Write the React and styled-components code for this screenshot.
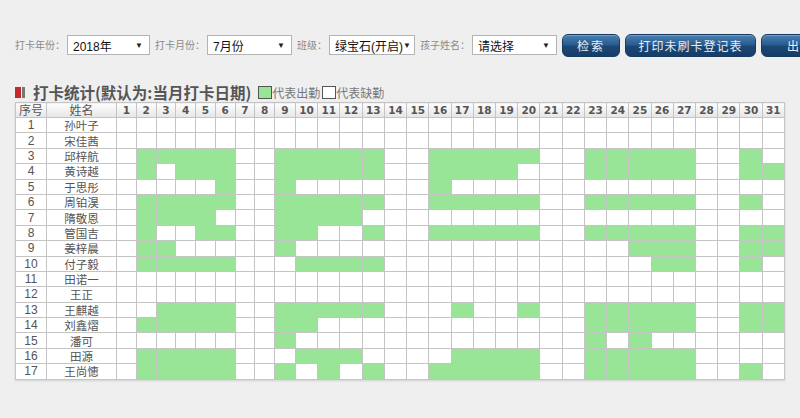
import React from "react";
import styled, { createGlobalStyle } from "styled-components";

const GlobalStyle = createGlobalStyle`
  html, body { margin: 0; padding: 0; background: #efefef; }
  body { font-family: "Liberation Sans", "Noto Sans CJK SC", sans-serif; }
`;

const Page = styled.div`
  width: 800px;
  height: 418px;
  overflow: hidden;
  background: #efefef;
  padding: 34px 0 0 15px;
  box-sizing: border-box;
`;

const Toolbar = styled.div`
  display: flex;
  align-items: center;
  white-space: nowrap;
  height: 22px;
`;

const Label = styled.span`
  font-family: "Noto Sans CJK SC", sans-serif;
  font-size: 10px;
  color: #8a8a8a;
  margin: 0 2px 0 ${(p) => (p.$first ? 0 : 5)}px;
  line-height: 20px;
  flex-shrink: 0;
`;

const Select = styled.div`
  box-sizing: border-box;
  width: ${(p) => p.$w}px;
  height: 20px;
  background: #fff;
  border: 1px solid #b4b4b4;
  display: flex;
  align-items: center;
  justify-content: space-between;
  padding: 0 6px 0 5px;
  font-family: "Liberation Sans", "Noto Sans CJK SC", sans-serif;
  font-size: 12px;
  color: #111;
  flex-shrink: 0;
`;

const Arrow = styled.span`
  font-size: 8px;
  color: #222;
`;

const Button = styled.div`
  box-sizing: border-box;
  flex-shrink: 0;
  width: ${(p) => p.$w}px;
  height: 23px;
  margin-left: 5px;
  border-radius: 6px;
  border: 1px solid #163a60;
  background: linear-gradient(#4b7fb2 0%, #2a5d90 45%, #1c4775 55%, #173d66 100%);
  box-shadow: inset 0 1px 0 rgba(255, 255, 255, 0.25);
  color: #e6eef8;
  font-family: "Noto Sans CJK SC", sans-serif;
  font-size: 12px;
  letter-spacing: ${(p) => p.$ls || 0}px;
  display: flex;
  align-items: center;
  justify-content: ${(p) => (p.$left ? "flex-start" : "center")};
  padding-left: ${(p) => (p.$left ? 25 : 0)}px;
`;

const TitleRow = styled.div`
  display: flex;
  align-items: center;
  margin-top: 27px;
  height: 18px;
`;

const Marker = styled.span`
  display: inline-block;
  width: 6px;
  height: 11px;
  background: #c42a2a;
  margin-right: 1px;
`;

const MarkerBar = styled.span`
  display: inline-block;
  width: 3px;
  height: 11px;
  background: #777;
  margin-right: 8px;
`;

const Title = styled.span`
  font-family: "Noto Sans CJK SC", sans-serif;
  font-weight: 700;
  font-size: 15.5px;
  line-height: 17px;
  color: #555;
  margin-right: 7px;
`;

const LegendBox = styled.span`
  display: inline-block;
  box-sizing: border-box;
  width: 14px;
  height: 13px;
  border: 1px solid #555;
  background: ${(p) => (p.$on ? "#98e598" : "#fff")};
`;

const LegendText = styled.span`
  font-family: "Noto Sans CJK SC", sans-serif;
  font-size: 12px;
  line-height: 15px;
  color: #777;
  margin-right: 2px;
`;

const Table = styled.table`
  margin-top: 1px;
  border-collapse: collapse;
  table-layout: fixed;
  width: 770px;
  background: #fff;
  box-shadow: 0 1px 2px rgba(0, 0, 0, 0.12);
`;

const Th = styled.th`
  height: 14px;
  padding: 0;
  border: 1px solid #c4c4c4;
  background: linear-gradient(#fdfdfd, #e6e6e6);
  font-family: "DejaVu Sans", "Noto Sans CJK SC", sans-serif;
  font-weight: 700;
  font-size: 10.5px;
  color: #555;
  text-align: center;
  line-height: 14px;
  overflow: hidden;
  white-space: nowrap;
`;

const ThCn = styled(Th)`
  font-family: "Noto Sans CJK SC", sans-serif;
  font-weight: 400;
  font-size: 12px;
`;

const Td = styled.td`
  height: 14.4px;
  padding: 0;
  border: 1px solid #c4c4c4;
  background: ${(p) => (p.$on ? "#98e598" : "#fff")};
  font-family: "Noto Sans CJK SC", sans-serif;
  font-size: 11.5px;
  color: #555;
  text-align: center;
  line-height: 14px;
  overflow: hidden;
  white-space: nowrap;
`;

const NumTd = styled(Td)`
  font-family: "Liberation Sans", sans-serif;
  font-size: 12px;
`;

const r = (a, b) => Array.from({ length: b - a + 1 }, (_, i) => a + i);

const students = [
  ["孙叶子", []],
  ["宋佳茜", []],
  ["邱梓航", [...r(2, 6), ...r(9, 13), ...r(16, 20), ...r(23, 27), 30]],
  ["黄诗越", [2, 4, 5, 6, ...r(9, 13), ...r(16, 19), ...r(23, 27), 30, 31]],
  ["于思彤", [6, 9, 16]],
  ["周铂淏", [...r(2, 6), ...r(9, 13), ...r(16, 20), ...r(23, 27), 30]],
  ["隋敬恩", [...r(2, 5), ...r(9, 12)]],
  ["管国吉", [2, 5, 6, 9, 10, 13, ...r(16, 20), ...r(23, 27), 30, 31]],
  ["姜梓晨", [2, 3, 9, 25, 26, 27, 30, 31]],
  ["付子毅", [...r(2, 6), ...r(10, 13), 26, 27, 30]],
  ["田诺一", []],
  ["王正", []],
  ["王麒越", [...r(3, 6), ...r(9, 13), 17, 20, ...r(23, 27), 30, 31]],
  ["刘鑫熠", [...r(2, 6), 9, 10, ...r(23, 27), 30, 31]],
  ["潘可", [9, 23, 25]],
  ["田源", [...r(2, 6), 10, 11, 12, ...r(17, 20), ...r(23, 27)]],
  ["王尚憓", [...r(2, 6), 9, 11, 13, ...r(16, 20), ...r(23, 27), 30]],
];

const days = r(1, 31);
const dayWidth = (d) => (d <= 8 ? 19.75 : d === 9 ? 21 : 22.23);

export default function App() {
  return (
    <Page>
      <GlobalStyle />
      <Toolbar>
        <Label $first>打卡年份：</Label>
        <Select $w={83}>
          <span>2018年</span>
          <Arrow>▼</Arrow>
        </Select>
        <Label>打卡月份：</Label>
        <Select $w={85}>
          <span>7月份</span>
          <Arrow>▼</Arrow>
        </Select>
        <Label>班级：</Label>
        <Select $w={86}>
          <span>绿宝石(开启)</span>
          <Arrow>▼</Arrow>
        </Select>
        <Label>孩子姓名：</Label>
        <Select $w={85}>
          <span>请选择</span>
          <Arrow>▼</Arrow>
        </Select>
        <Button $w={58} $ls={2}>检索</Button>
        <Button $w={131} $ls={1}>打印未刷卡登记表</Button>
        <Button $w={110} $ls={1} $left>出勤统计表</Button>
      </Toolbar>
      <TitleRow>
        <Marker />
        <MarkerBar />
        <Title>打卡统计(默认为:当月打卡日期)</Title>
        <LegendBox $on />
        <LegendText>代表出勤</LegendText>
        <LegendBox />
        <LegendText>代表缺勤</LegendText>
      </TitleRow>
      <Table>
        <colgroup>
          <col style={{ width: 31 }} />
          <col style={{ width: 70 }} />
          {days.map((d) => (
            <col key={d} style={{ width: dayWidth(d) }} />
          ))}
        </colgroup>
        <thead>
          <tr>
            <ThCn>序号</ThCn>
            <ThCn>姓名</ThCn>
            {days.map((d) => (
              <Th key={d}>{d}</Th>
            ))}
          </tr>
        </thead>
        <tbody>
          {students.map(([name, present], i) => (
            <tr key={name}>
              <NumTd>{i + 1}</NumTd>
              <Td>{name}</Td>
              {days.map((d) => (
                <Td key={d} $on={present.includes(d)} />
              ))}
            </tr>
          ))}
        </tbody>
      </Table>
    </Page>
  );
}
